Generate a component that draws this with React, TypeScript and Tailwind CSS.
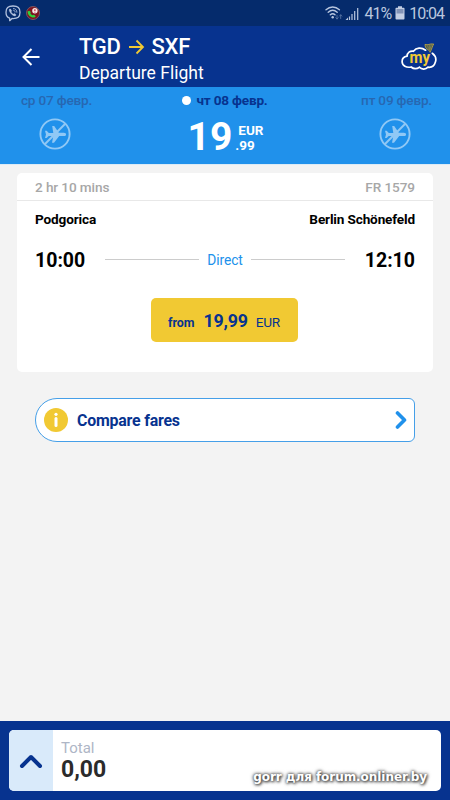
import React from "react";

function ViberIcon() {
  return (
    <svg width="16" height="17" viewBox="0 0 16 17" fill="none" stroke="#b4c3df" strokeLinecap="round" strokeLinejoin="round">
      <path d="M8 1C3 1 1 2.600 1 7.300c0 3.400 1.100 5.100 3.700 5.900v2.500l2.300-2.200c6 .3 8-1.600 8-6.200C15 2.600 13 1 8 1Z" strokeWidth="1.300" />
      <path d="M4.600 4.300c-.8.600-.3 2 .7 3.400 1.300 1.900 3.500 3.400 4.700 3.200.9-.2 1.300-1.100.8-1.500l-1.400-1-.9.700C7.300 8.700 6.500 7.800 6.100 6.700l.7-.8-1-1.600c-.3-.4-.7-.3-1.200 0Z" fill="#b4c3df" strokeWidth=".4" />
      <path d="M8.400 3.500c2.300.2 3.500 1.500 3.500 3.800M8.600 5.300c1 .1 1.500.7 1.500 1.700" strokeWidth=".8" />
    </svg>
  );
}

function CallIcon() {
  return (
    <svg width="14" height="14" viewBox="0 0 14 14">
      <circle cx="7" cy="7" r="6.500" fill="#7d1420" stroke="#8c6268" strokeWidth=".8" />
      <path d="M1.600 5.600c-.2 3.700 3.500 6.600 7 5.900l1.200-1.200-1.800-1.600-1.400.5C5.500 8.700 4.800 8.100 4.300 7.200l.6-1.200L3.200 4.700Z" fill="#2fd23c" />
      <circle cx="8.900" cy="4.800" r="2.700" fill="#f8e9e9" />
      <path d="M8.900 3.200v1.900m0 .6v.7" stroke="#c52131" strokeWidth="1.200" />
    </svg>
  );
}

function StatusIcons() {
  return (
    <svg width="34" height="16" viewBox="0 0 34 16" fill="none" stroke="#b8c6df" strokeLinecap="round">
      <path d="M1 4.700c4-3.600 9.400-3.600 13.400 0M3.200 7.300c2.700-2.400 6.300-2.400 9 0M5.300 9.800c1.500-1.300 3.300-1.300 4.700 0" strokeWidth="1.400" />
      <circle cx="7.700" cy="12.200" r="1.200" fill="#b8c6df" stroke="none" />
      <path d="M12 10.300v3.700m-1.200-1.300 1.200 1.300 1.200-1.300M15.700 13.500v-3.700m-1.200 1.300 1.200-1.300 1.200 1.300" stroke="#617ba8" strokeWidth=".8" />
      <path d="M24.500 11.500v3.500M27 9v6M29.700 6v9M32.700 3v12" strokeWidth="1.200" strokeLinecap="butt" />
      <path d="m20.500 15 2.500-2.500V15Z" fill="#b8c6df" stroke="none" />
    </svg>
  );
}

function BatteryIcon() {
  return (
    <svg width="10" height="14" viewBox="0 0 10 14">
      <path d="M3 .2h4v1.600h1.700c.5 0 .8.300.8.800v10c0 .5-.3.900-.8.900H1.300c-.5 0-.8-.4-.8-.9v-10c0-.5.300-.8.800-.8H3Z" fill="#c3cee3" />
      <path d="M1.500 3h7v4.500h-7z" fill="#8293b6" />
    </svg>
  );
}

function MyCloud() {
  return (
    <svg width="36" height="30" viewBox="0 0 36 30">
      <path d="M31.300 11.300c2.900 2.200 4.300 5.600 3 9-.9 3.200-3.700 5.400-7.300 4.900-2.500 2.700-6.600 2.200-8.500 0-3 2-6.400 1.500-8.400-.2C5.400 26 1.200 23.700 1.100 19.800c-.1-3 2-5.200 5-5.700 0-3.400 3-5.600 6.300-4.900 2.900-3.700 8-4 12.200-1" fill="none" stroke="#fff" strokeWidth="1.700" strokeLinecap="round" />
      <text x="8.600" y="21.400" fill="#f1c933" fontFamily="Roboto, sans-serif" fontWeight="700" fontSize="16" textLength="20.500" lengthAdjust="spacingAndGlyphs">my</text>
      <path d="M24 2.400c3 1.200 4.500-1 8.700-.4-1.200 2-2 5.200-3.600 8.300-.7-1.700-1.600-2.600-3-3.200-1.500-.8-2-2.800-2.100-4.700Z" fill="#53604f" stroke="#b7a143" strokeWidth=".9" />
      <path d="m26.200 3.500 2.600 4.800M28.300 3l.6 4.700M30.500 2.500l-1.600 5" stroke="#b7a143" strokeWidth=".4" />
    </svg>
  );
}

function NoFlight() {
  return (
    <svg width="32" height="32" viewBox="0 0 32 32" fill="none">
      <circle cx="16" cy="16" r="14.600" stroke="#90c8f5" strokeWidth="1.900" />
      <path d="m5.500 26.500 21-21" stroke="#90c8f5" strokeWidth="2" />
      <path d="M6 12.800h1.700l2.100 2.200h4.500L13.200 8h2l4.600 6.700h5c1.500 0 2.300.9 2.300 1.700s-.8 1.700-2.300 1.700h-4.600L15 24.700h-2l1.300-6.600h-4.600l-2.100 2H6l1-3.600Z" fill="#90c8f5" />
    </svg>
  );
}

function DateTab({ label }: { label: string }) {
  return (
    <div className="flex w-[110px] flex-col items-center pt-[5px]">
      <span className="pl-[3px] text-[13.6px] leading-4 font-medium tracking-[-0.2px] whitespace-nowrap text-[#2767b1]">{label}</span>
      <div className="mt-[10px]"><NoFlight /></div>
    </div>
  );
}

export default function App() {
  return (
    <main className="flex h-[800px] w-[450px] flex-col overflow-hidden bg-[#f3f3f3] font-[Roboto,sans-serif]">
      <div className="flex h-[26px] shrink-0 items-center bg-[#052b6c] pr-[7px] pl-[5px] text-[#b9c7df]">
        <ViberIcon />
        <div className="ml-[5px]"><CallIcon /></div>
        <div className="ml-auto"><StatusIcons /></div>
        <span className="mt-[2px] ml-[5px] text-[16px] leading-5 tracking-[-1px]">41%</span>
        <div className="mr-[4px] ml-[4px]"><BatteryIcon /></div>
        <span className="mt-[2px] -mr-[1px] text-[16px] leading-5 tracking-[-1px]">10:04</span>
      </div>

      <header className="flex h-[61px] shrink-0 items-center bg-[#07338f] pr-[13px] pl-[22px] text-white">
        <svg width="18" height="18" viewBox="0 0 18 18" fill="none" stroke="white" strokeWidth="2"><path d="M17.500 9H1.500M9.500 1 1.500 9l8 8" /></svg>
        <div className="mt-[6px] ml-[39px]">
          <div className="flex items-center text-[22px] leading-6 font-medium tracking-[-0.3px]">
            <span>TGD</span>
            <svg className="mr-[7px] ml-[8px]" width="16" height="16" viewBox="0 0 16 16" fill="none" stroke="#f1c933" strokeWidth="1.800"><path d="M0 8h14M7.500 1.500 14 8l-6.500 6.500" /></svg>
            <span>SXF</span>
          </div>
          <div className="mt-[2px] text-[17.5px] leading-6">Departure Flight</div>
        </div>
        <div className="ml-auto"><MyCloud /></div>
      </header>

      <section className="flex h-[78px] shrink-0 justify-between border-b border-[#dcebf6] bg-[#2091eb]">
        <DateTab label="ср 07 февр." />
        <div className="flex w-[120px] flex-col items-center pt-[5px]">
          <div className="flex items-center gap-[5px] text-[13.6px] leading-4 font-bold tracking-[-0.2px] whitespace-nowrap text-[#07338f]">
            <span className="size-[9px] rounded-full bg-white" />
            <span>чт 08 февр.</span>
          </div>
          <div className="mt-[8px] flex items-center pl-[1px] text-white">
            <span className="text-[39px] leading-[42px] font-bold">19</span>
            <div className="mt-[2px] ml-[3px] text-[13.5px] leading-[15px] font-bold"><div className="pl-[3px]">EUR</div><div>.99</div></div>
          </div>
        </div>
        <DateTab label="пт 09 февр." />
      </section>

      <article className="mx-[17px] mt-[8px] h-[199px] shrink-0 rounded-[5px] bg-white">
        <div className="flex h-7 items-center justify-between border-b border-[#e8e8e8] px-[18px] pt-[2px] text-[13.6px] font-medium tracking-[-0.1px] text-[#a7a7a7]">
          <span>2 hr 10 mins</span><span>FR 1579</span>
        </div>
        <div className="mt-[9px] flex justify-between px-[18px] text-[13.6px] leading-[18px] font-bold tracking-[-0.15px] text-black">
          <span>Podgorica</span><span>Berlin Schönefeld</span>
        </div>
        <div className="mt-[20px] flex h-6 items-center justify-between px-[18px] text-[19.5px] font-bold text-black">
          <span className="mt-px">10:00</span>
          <div className="flex w-[240px] items-center justify-between">
            <span className="h-px w-[94px] -translate-y-px bg-[#cccccc]" />
            <span className="text-[13.8px] font-normal tracking-[-0.1px] text-[#2091eb]">Direct</span>
            <span className="h-px w-[94px] -translate-y-px bg-[#cccccc]" />
          </div>
          <span className="mt-px">12:10</span>
        </div>
        <button className="mt-[26px] ml-[134px] flex h-[44px] w-[147px] items-baseline rounded-[5px] bg-[#f1c933] pt-[11px] pl-[17px] text-[#07338f]">
          <span className="text-[12.4px] font-bold">from</span>
          <span className="ml-[9px] text-[17.8px] leading-6 font-bold tracking-[-0.2px]">19,99</span>
          <span className="ml-[8px] text-[13.6px] tracking-[-0.2px]">EUR</span>
        </button>
      </article>

      <button className="mx-[35px] mt-[26px] flex h-[44px] w-[380px] shrink-0 items-center rounded-l-[22px] rounded-r-[6px] border border-[#459fe8] bg-white pr-[7px] pl-[8px] text-[#07338f]">
        <svg width="24" height="24" viewBox="0 0 24 24"><circle cx="12" cy="12" r="12" fill="#f1c933" /><path d="M12 10.500v7" stroke="white" strokeWidth="3" strokeLinecap="round" /><circle cx="12" cy="6.300" r="1.600" fill="white" /></svg>
        <span className="mt-[2px] ml-[9px] text-[15.9px] font-bold tracking-[-0.2px]">Compare fares</span>
        <svg className="ml-auto" width="12" height="18" viewBox="0 0 12 18" fill="none" stroke="#2091eb" strokeWidth="3.600" strokeLinecap="round" strokeLinejoin="round"><path d="m2.500 2 7 7-7 7" /></svg>
      </button>

      <footer className="mt-auto h-[79px] shrink-0 bg-[#07338f] px-[9px] pt-[9px]">
        <div className="relative flex h-[61px] overflow-hidden rounded-[5px] bg-white">
          <div className="flex w-11 items-center justify-center bg-[#d9eafa]">
            <svg width="24" height="16" viewBox="0 0 24 16" fill="none" stroke="#07338f" strokeWidth="4" strokeLinecap="round" strokeLinejoin="round"><path d="m3 13 9-9 9 9" /></svg>
          </div>
          <div className="pt-[9px] pl-[8px]">
            <div className="text-[15px] leading-[18px] text-[#aeb6c6]">Total</div>
            <div className="text-[23px] leading-[26px] font-bold text-[#2b2b2b]">0,00</div>
          </div>
          <span className="absolute right-[14px] bottom-[6px] font-['DejaVu_Sans',sans-serif] text-[12px] leading-4 font-bold tracking-[-0.05px] whitespace-nowrap text-white [text-shadow:1px_1px_3px_#444,0_0_3px_#444,0_0_4px_#777]">gorr для forum.onliner.by</span>
        </div>
      </footer>
    </main>
  );
}
